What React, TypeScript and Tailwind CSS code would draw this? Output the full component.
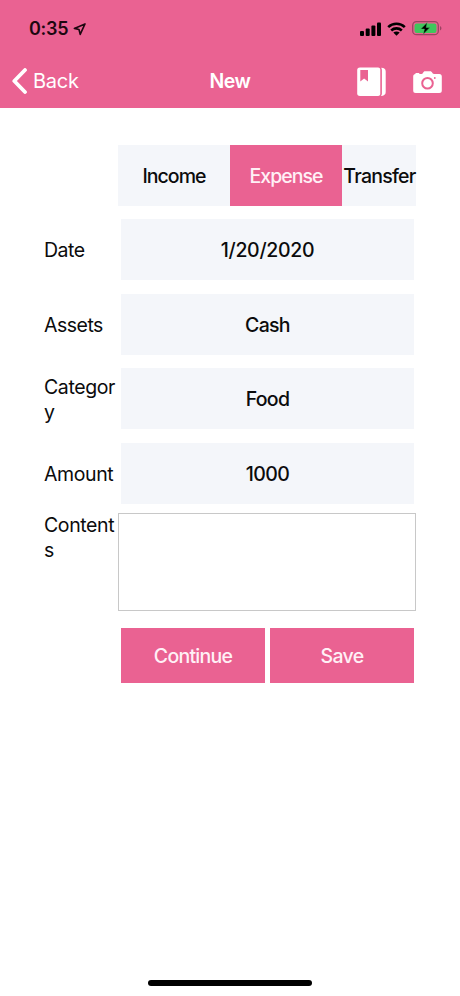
import { useState } from 'react'

type Row = {
  label: string
  value: string
  labelClass: string
  valueClass: string
}

const tabs = [
  { name: 'Income', className: 'tracking-[-0.95px]' },
  { name: 'Expense', className: 'tracking-[-1px]' },
  { name: 'Transfer', className: 'tracking-[-0.75px] pl-px' }
]

const rows: Row[] = [
  { label: 'Date', value: '1/20/2020', labelClass: 'tracking-[-0.5px]', valueClass: 'tracking-[-0.3px]' },
  { label: 'Assets', value: 'Cash', labelClass: 'tracking-[-0.5px]', valueClass: 'tracking-[-0.7px]' },
  { label: 'Category', value: 'Food', labelClass: 'tracking-[-0.4px]', valueClass: 'tracking-[-0.7px]' },
  { label: 'Amount', value: '1000', labelClass: 'tracking-[-0.4px]', valueClass: 'tracking-[-0.6px]' }
]

function StatusBar() {
  return (
    <div className="flex h-[55px] items-center justify-between pl-[29px] pr-[18px] pt-[2px] text-[#1d0710]">
      <div className="flex items-center pt-px">
        <span className="text-[18px] font-semibold leading-6 tracking-[-0.3px]">0:35</span>
        <svg className="ml-[5px]" width="13" height="13" viewBox="0 0 13 13" fill="none" stroke="currentColor" strokeWidth="1.6" strokeLinejoin="round">
          <path d="M12 0.9L1.4 5.4L6 6.5L7.2 11.4Z" />
        </svg>
      </div>
      <div className="flex items-center">
        <svg width="21" height="14" viewBox="0 0 21 14" fill="#000">
          <rect x="0" y="9" width="4" height="5" rx="1" />
          <rect x="5.7" y="6.5" width="4" height="7.5" rx="1" />
          <rect x="11.4" y="3.5" width="4" height="10.5" rx="1" />
          <rect x="17" y="0.5" width="4" height="13.5" rx="1" />
        </svg>
        <svg className="ml-[6px]" width="19" height="14" viewBox="0 0 19 14" fill="none" stroke="#000" strokeWidth="2.6">
          <path d="M1.2 5.1C5.8 0.7 13.2 0.7 17.8 5.1" />
          <path d="M4.2 8.5C7.2 5.7 11.8 5.7 14.8 8.5" />
          <path d="M6.3 10.6C8.1 9 10.9 9 12.7 10.6L9.5 13.8Z" fill="#000" stroke="none" />
        </svg>
        <svg className="ml-[6px]" width="30" height="15" viewBox="0 0 30 15">
          <rect x="0.7" y="0.7" width="25.6" height="13" rx="3.8" fill="none" stroke="#9c4262" strokeWidth="1.3" />
          <rect x="2.5" y="2.5" width="22" height="9.5" rx="2.2" fill="#3fc65c" />
          <path d="M28 5C30 6 30 8.5 28 9.5Z" fill="#9c4262" />
          <path d="M15.2 1.4L8.7 8.1H12.4L11.3 13.2L18 6.4H14.2Z" fill="#000" stroke="#3fc65c" strokeWidth="0.5" />
        </svg>
      </div>
    </div>
  )
}

function NavBar() {
  return (
    <div className="grid h-[52px] grid-cols-3 items-center pl-3 pr-[18px] text-white">
      <button className="flex items-center">
        <svg width="16" height="26" viewBox="0 0 16 26" fill="none" stroke="currentColor" strokeWidth="3.8" strokeLinecap="round" strokeLinejoin="round">
          <path d="M13 2L2.3 13L13 24" />
        </svg>
        <span className="ml-[5px] text-[20px] leading-6 tracking-[-0.25px]">Back</span>
      </button>
      <h1 className="ml-[6px] text-center text-[19.5px] font-semibold leading-6 tracking-[-0.4px]">New</h1>
      <div className="flex items-center justify-end gap-[27px] pt-[2px]">
        <svg width="29" height="30" viewBox="0 0 29 30">
          <path d="M3 0.5H21C22.7 0.5 23.3 1.5 23.3 3V26.5C23.3 28 22.7 29 21 29H3C1 29 0.2 28 0.2 26.5V3C0.2 1.5 1 0.5 3 0.5Z" fill="#fff" />
          <path d="M24.2 0.8C27.3 1 28.7 2 28.7 4.5V25C28.7 27.5 27.3 28.8 23.7 29C24.6 28.2 24.9 27.5 24.9 26V3.5C24.9 2.3 24.7 1.5 24.2 0.8Z" fill="#fff" />
          <path d="M3.3 3H11V14.5L7.1 11.4L3.3 14.5Z" fill="#ea6292" />
        </svg>
        <svg width="29" height="24" viewBox="0 0 29 24">
          <path d="M2.5 3.9V3.1H6.3V3.9H8.6C10.5 3.9 10 1.2 12 1.2H17.2C19.2 1.2 19 3.9 21 3.9H26.3C28 3.9 28.8 4.8 28.8 6.4V20.5C28.8 22.2 28 23 26.3 23H2.7C1 23 0.2 22.2 0.2 20.5V6.4C0.2 4.8 1 3.9 2.5 3.9Z" fill="#fff" />
          <circle cx="14.5" cy="13.3" r="5.3" fill="none" stroke="#ea6292" strokeWidth="2" />
          <circle cx="21.8" cy="8" r="0.9" fill="#ea6292" />
        </svg>
      </div>
    </div>
  )
}

export default function App() {
  const [selected, setSelected] = useState('Expense')
  const [contents, setContents] = useState('')

  return (
    <div className="flex h-[996px] w-[460px] flex-col overflow-hidden bg-white font-['Inter','Liberation_Sans',sans-serif] text-[19.5px] leading-[25px] text-[#0b0b0c]">
      <header className="h-[108px] shrink-0 bg-[#ea6292]">
        <StatusBar />
        <NavBar />
      </header>

      <main className="flex-1 pl-11 pr-[44px] pt-[37px]">
        <div className="ml-[74px] grid h-[61px] w-[298px] grid-cols-[112px_112px_74px] bg-[#f4f6fa]">
          {tabs.map((tab) => (
            <button
              key={tab.name}
              onClick={() => setSelected(tab.name)}
              className={`flex items-center justify-center pt-[2px] font-medium ${tab.className} ${
                selected === tab.name ? 'bg-[#ea6292] text-[#fff0f6]' : ''
              }`}
            >
              {tab.name}
            </button>
          ))}
        </div>

        <div className="mt-[13px] flex flex-col gap-[13.7px]">
          {rows.map((row) => (
            <div key={row.label} className="flex h-[61px] items-center">
              <span className={`mr-[3px] w-[74px] shrink-0 break-all pt-[2px] ${row.labelClass}`}>{row.label}</span>
              <button className={`h-full w-[293px] bg-[#f4f6fa] pt-[2px] font-medium ${row.valueClass}`}>{row.value}</button>
            </div>
          ))}
        </div>

        <div className="mt-[9px] flex">
          <span className="w-[74px] shrink-0 break-all tracking-[-0.4px]">Contents</span>
          <textarea
            value={contents}
            onChange={(e) => setContents(e.target.value)}
            className="block h-[98px] w-[298px] resize-none border border-[#c8c8c8] p-2 outline-none"
          />
        </div>

        <div className="ml-[77px] mt-[17px] flex w-[293px] gap-[5px] text-[#fff0f6]">
          <button className="h-[55px] flex-1 bg-[#ea6292] pt-[2px] font-[450] tracking-[-0.75px]">Continue</button>
          <button className="h-[55px] flex-1 bg-[#ea6292] pt-[2px] font-[450] tracking-[-0.7px]">Save</button>
        </div>
      </main>

      <div className="mx-auto mb-[10px] h-[6px] w-[164px] shrink-0 rounded-full bg-black" />
    </div>
  )
}
